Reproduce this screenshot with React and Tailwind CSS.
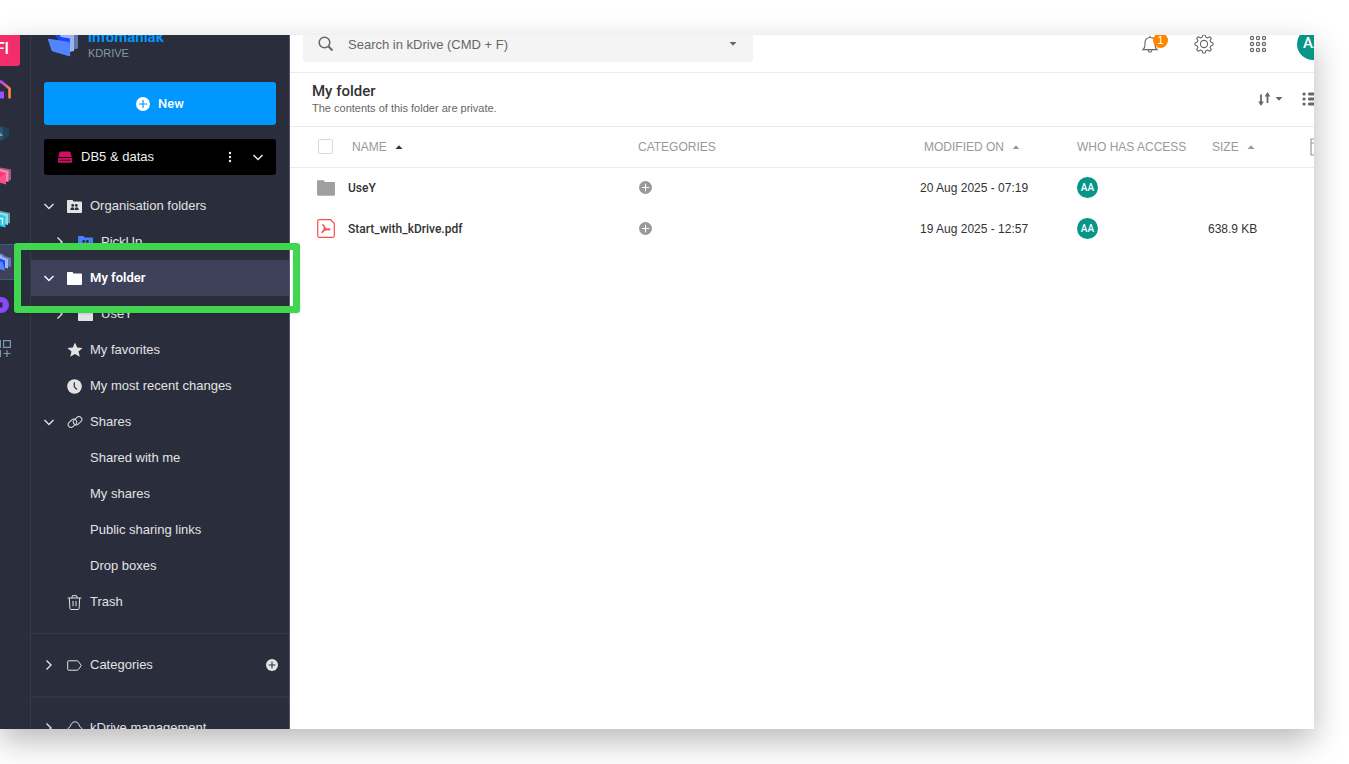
import clsx from 'clsx'

function Chevron({ open, className }) {
  return (
    <svg viewBox="0 0 12 12" className={clsx('size-3 shrink-0', className)} fill="none" stroke="currentColor" strokeWidth="1.4">
      <path d={open ? 'M1.5 3.9 6 8.4l4.5-4.5' : 'M3.5 1.5 8 6l-4.5 4.5'} />
    </svg>
  )
}

function Caret({ up, className }) {
  return (
    <svg viewBox="0 0 8 4" className={clsx('h-1 w-2 shrink-0', className)} fill="currentColor">
      <path d={up ? 'M.5 4h7L4 .3z' : 'M.5 0h7L4 3.7z'} />
    </svg>
  )
}

function PlusCircle({ className, cross }) {
  return (
    <svg viewBox="0 0 14 14" className={clsx('shrink-0', className)}>
      <circle cx="7" cy="7" r="7" fill="currentColor" />
      <path d="M7 3v8M3 7h8" stroke={cross} strokeWidth="1.2" />
    </svg>
  )
}

function FolderIcon({ className, people }) {
  return (
    <svg viewBox="0 0 15 13" className={clsx('shrink-0', className)}>
      <path d="M.8 0h4.4c.5 0 .8.2.9.7l.3.9h7.8c.4 0 .8.3.8.8v9.8c0 .4-.4.8-.8.8H.8c-.4 0-.8-.4-.8-.8V.8C0 .4.4 0 .8 0z" fill="currentColor" />
      {people && (
        <g fill="#292d3c">
          <circle cx="5.7" cy="5.4" r="1.4" />
          <circle cx="9.3" cy="5.4" r="1.4" />
          <path d="M3.3 10c0-1.9.9-2.8 2.2-2.8 1.2 0 1.8.6 1.9 2.8zM7.8 10c0-1.9.6-2.8 1.7-2.8 1.3 0 2.2.9 2.2 2.8z" />
        </g>
      )}
    </svg>
  )
}

const icons = {
  org: <FolderIcon people className="h-[13px] w-[15px]" />,
  shared: <FolderIcon people className="h-[13px] w-[15px] text-[#4a7dff]" />,
  folder: <FolderIcon className="h-[13px] w-[15px]" />,
  star: (
    <svg viewBox="0 0 16 16" className="size-4 shrink-0" fill="currentColor">
      <path d="m8 .5 2.200 5 5.400.5-4.100 3.500 1.300 5.300L8 12.100l-4.800 2.700 1.300-5.300L.4 6l5.400-.5z" />
    </svg>
  ),
  clock: (
    <svg viewBox="0 0 15 15" className="size-[15px]">
      <circle cx="7.5" cy="7.5" r="7.3" fill="currentColor" />
      <path d="M7.3 3.300v4.500l2.700 2.700" fill="none" stroke="#292d3c" strokeWidth="1.2" />
    </svg>
  ),
  link: (
    <svg viewBox="0 0 16 16" className="size-4 shrink-0" fill="none" stroke="currentColor" strokeWidth="1">
      <rect x="-4.7" y="-2.9" width="9.4" height="5.8" rx="2.9" transform="translate(5.4 9.3) rotate(-42)" />
      <rect x="-4.7" y="-2.9" width="9.4" height="5.8" rx="2.9" transform="translate(10.6 6.7) rotate(-42)" />
    </svg>
  ),
  trash: (
    <svg viewBox="0 0 15 15" className="size-[15px]" fill="none" stroke="currentColor" strokeWidth="1">
      <path d="M.7 3h13.600M4.800 3l.6-2.300h4.200l.6 2.300M2.300 3l.6 10.400c0 .6.5 1.100 1.100 1.100h7c.6 0 1.100-.5 1.100-1.100L12.700 3M6 5.900v5.300M9 5.900v5.300" />
    </svg>
  ),
  tag: (
    <svg viewBox="0 0 15 11" className="h-[11px] w-[15px]" fill="none" stroke="currentColor" strokeWidth="1">
      <path d="M1.5.8h8.900c.4 0 .7.2.9.5l3 4.200-3 4.200c-.2.300-.5.500-.9.500H1.500c-.5 0-.8-.3-.8-.8V1.600c0-.5.3-.8.800-.8z" />
    </svg>
  ),
  cloud: (
    <svg viewBox="0 0 16 14" className="h-[14px] w-4 shrink-0" fill="none" stroke="currentColor" strokeWidth="1">
      <path d="M4 13c-2 0-3.300-1.300-3.300-3.200S1.900 6 3.300 5.500C3.800 2.900 5.600.8 8 .8s4.200 2.100 4.700 4.700c1.400.5 2.600 2.400 2.600 4.300S14 13 12 13z" />
    </svg>
  ),
}

const navItems = [
  { label: 'Organisation folders', icon: 'org', open: true },
  { label: 'PickUp', icon: 'shared', open: false, nested: true },
  { label: 'My folder', icon: 'folder', open: true, active: true },
  { label: 'UseY', icon: 'folder', open: false, nested: true },
  { label: 'My favorites', icon: 'star' },
  { label: 'My most recent changes', icon: 'clock' },
  { label: 'Shares', icon: 'link', open: true },
  { label: 'Shared with me' },
  { label: 'My shares' },
  { label: 'Public sharing links' },
  { label: 'Drop boxes' },
  { label: 'Trash', icon: 'trash' },
]

const files = [
  { name: 'UseY', type: 'folder', modified: '20 Aug 2025 - 07:19', size: '' },
  { name: 'Start_with_kDrive.pdf', type: 'pdf', modified: '19 Aug 2025 - 12:57', size: '638.9 KB' },
]

function NavItem({ item }) {
  return (
    <li className="relative">
      <a
        href="#"
        className={clsx(
          'flex h-9 items-center text-[13px]',
          item.nested ? 'pl-[23px]' : 'pl-3',
          item.active ? "bg-[#3e415a] font-['Roboto'] font-semibold text-white" : 'text-[#e3e3e3]'
        )}
      >
        <span className="w-6 shrink-0">
          {item.open !== undefined && <Chevron open={item.open} />}
        </span>
        <span className="flex w-[23px] shrink-0">
          <span className="flex w-[15px] justify-center">{icons[item.icon]}</span>
        </span>
        {item.label}
      </a>
      {item.active && (
        <span className="pointer-events-none absolute -top-[17px] -right-[11px] -bottom-[17px] -left-[17px] z-20 rounded-[3px] border-[7px] border-[#41d650] shadow-sm" />
      )}
    </li>
  )
}

function RailIcon({ name }) {
  if (name === 'home') {
    return (
      <svg viewBox="0 0 22 20" className="h-5 w-[22px]" fill="none">
        <defs>
          <linearGradient id="home" x1="0" x2="1">
            <stop offset=".35" stopColor="#8b4dff" />
            <stop offset=".75" stopColor="#f04fc0" />
            <stop offset="1" stopColor="#ff8a3c" />
          </linearGradient>
        </defs>
        <path d="M1.5 18.500V8.500L11 1.500l8.500 7v10" stroke="url(#home)" strokeWidth="2.6" />
        <path d="M7 18.500v-7h7v7z" fill="#9b51ff" />
      </svg>
    )
  }
  if (name === 'chat') {
    return (
      <svg viewBox="0 0 20 20" className="size-5">
        <path d="m2 2 9 1 7 3v7l-5 4-6 2z" fill="#1f4257" />
        <path d="m2 3.500 10 1v11L7 18z" fill="#28566f" />
        <path d="M8 8v5h4z" fill="#8796a1" />
      </svg>
    )
  }
  if (name === 'mail') {
    return (
      <svg viewBox="0 0 22 20" className="h-5 w-[22px]">
        <path d="m8 1 13 2.500v11L8 12z" fill="#a75d80" />
        <path d="m5 2 13.500 3v11L5 13z" fill="#ee8dad" />
        <path d="m0 3 16 4v11.500L0 14z" fill="#f9508c" />
        <path d="m0 3 9 9 7-5z" fill="#ff3475" />
      </svg>
    )
  }
  if (name === 'calendar') {
    return (
      <svg viewBox="0 0 20 20" className="size-5">
        <path d="m6 1 13 3v10.500L6 12z" fill="#5e9eaa" />
        <path d="m4 2 13 3v11L4 13z" fill="#95dce4" />
        <path d="m0 3 14.500 4v11.500L0 15z" fill="#27c9ea" />
        <path d="M8.500 9.500h3v6" stroke="#fff" strokeWidth="1.3" fill="none" />
      </svg>
    )
  }
  if (name === 'drive') {
    return (
      <svg viewBox="0 0 20 20" className="size-5 shrink-0">
        <path d="m6 1 6 1 1.500 2L20 6v9l-7-1z" fill="#6678b8" />
        <path d="m4 2 6 1 1.500 2L17 7v9.500l-8-2z" fill="#9fb5ef" />
        <path d="m0 4 8 2 6 2.500v9L4 14z" fill="#184aff" />
        <path d="m0 8 11.500 2 2.500 8.500L0 15z" fill="#5687ff" />
      </svg>
    )
  }
  if (name === 'meet') {
    return (
      <svg viewBox="0 0 16 16" className="size-4">
        <circle cx="8" cy="8" r="8" fill="#8a48f8" />
        <path d="M4 5.500h5.500v5H4z" fill="#272b3a" />
      </svg>
    )
  }
  return (
    <svg viewBox="0 0 22 20" className="h-5 w-[22px]" fill="none" stroke="#7b98ac" strokeWidth="1.2">
      <path d="M3.6 2.600h6.800v6.800H3.600zM13.600 2.600h6.800v6.800h-6.800zM3.600 12.600h6.800v5.800H3.600zM17 12v7M13.500 15.500h7" />
    </svg>
  )
}

function Rail() {
  return (
    <nav aria-label="Applications" className="flex w-[59px] shrink-0 flex-col items-center border-r border-[#353a4b] pt-3">
      <button className="mb-[2px] flex h-[39px] w-[38px] shrink-0 items-center justify-end rounded-[3px] bg-[#f12d6b] pt-1 pr-[11px] font-['Roboto'] text-[16px] font-medium text-white">
        FI
      </button>
      {['home', 'chat', 'mail', 'calendar', 'drive', 'meet', 'apps'].map((name) => (
        <a key={name} href="#" aria-label={name} className="flex h-[43px] shrink-0 items-center">
          <span
            className={clsx(
              'flex h-9 w-9 items-center justify-center',
              name === 'drive' && 'border-y border-[#375f80] bg-[#3e415a]'
            )}
          >
            <RailIcon name={name} />
          </span>
        </a>
      ))}
    </nav>
  )
}

function Sidebar() {
  return (
    <aside className="z-10 w-[259px] shrink-0 border-r border-[#55596a]">
      <div className="flex h-[67px] items-center pb-3 pl-4">
        <svg viewBox="0 0 32 30" className="mr-[9px] h-[30px] w-8">
          <path d="m13 0 18 2v18.500l-9 2z" fill="#6377ad" />
          <path d="m10 2 17 1v20l-7 1.500z" fill="#9bb2ee" />
          <path d="m5 4 7 2 2 3 9 1.500-1 14z" fill="#1747ff" />
          <path d="M1 11.800c-.2-.8.3-1.300 1-1.100l19 3c.8.1 1 .5 1.100 1.200l1.200 12.300c0 .9-.5 1.300-1.300 1L6 23.500c-.8-.2-1.200-.6-1.500-1.300z" fill="#5185ff" />
        </svg>
        <div className="pt-1">
          <div className="font-['Roboto'] text-[15px] leading-[16px] font-bold text-[#0098ff]">infomaniak</div>
          <div className="text-[11px] leading-[16px] text-[#8298ab]">KDRIVE</div>
        </div>
      </div>
      <div className="flex flex-col gap-[14px] px-[13px]">
        <button className="flex h-[43px] items-center justify-center gap-2 rounded-[3px] bg-[#0098ff] font-['Roboto'] text-[13px] font-medium text-white">
          <PlusCircle className="size-[14px]" cross="#0098ff" />
          New
        </button>
        <div className="flex h-9 items-center rounded-[3px] bg-black pr-3 pl-[14px] text-[13px] text-[#f0f0f0]">
          <svg viewBox="0 0 14 12" className="mr-[9px] h-3 w-[14px]" fill="#d10f63">
            <path d="M2.500.5h9c.5 0 .8.200.9.700L13.800 6H.2l1.400-4.800c.1-.5.400-.7.900-.7zM0 7h14v3.700c0 .6-.4 1-1 1H1c-.6 0-1-.4-1-1z" />
            <path d="M1.500 9.300h11" stroke="#000" strokeWidth=".7" />
          </svg>
          DB5 &amp; datas
          <button aria-label="Drive options" className="ml-auto">
            <svg viewBox="0 0 4 12" className="h-3 w-1" fill="currentColor">
              <circle cx="2" cy="2" r="1.2" />
              <circle cx="2" cy="6" r="1.2" />
              <circle cx="2" cy="10" r="1.2" />
            </svg>
          </button>
          <button aria-label="Switch drive" className="ml-5">
            <Chevron open />
          </button>
        </div>
      </div>
      <ul className="mt-[13px]">
        {navItems.map((item) => (
          <NavItem key={item.label} item={item} />
        ))}
      </ul>
      <ul className="mt-[13px] border-t border-[#353a4b]">
        <li className="flex items-center border-b-2 border-[#303547] py-[13px] pr-[11px]">
          <div className="flex-1">
            <ul>
              <NavItem item={{ label: 'Categories', icon: 'tag', open: false }} />
            </ul>
          </div>
          <button aria-label="Add category" className="text-[#e3e3e3]">
            <PlusCircle className="size-3" cross="#292d3c" />
          </button>
        </li>
      </ul>
      <ul className="mt-3">
        <NavItem item={{ label: 'kDrive management', icon: 'cloud', open: false }} />
      </ul>
    </aside>
  )
}

function TopBar() {
  return (
    <header className="flex h-[58px] shrink-0 items-center border-b border-[#ebebeb] pr-[21px] pl-[13px] text-[#666]">
      <label className="flex h-9 w-[450px] items-center rounded-[3px] bg-[#f4f4f4] pr-4 pl-[15px]">
        <svg viewBox="0 0 16 16" className="mr-[14px] size-4" fill="none" stroke="currentColor" strokeWidth="1.5">
          <circle cx="6.5" cy="6.5" r="5.3" />
          <path d="m10.500 10.500 4 4" strokeWidth="1.9" />
        </svg>
        <input
          type="search"
          aria-label="Search"
          placeholder="Search in kDrive (CMD + F)"
          className="flex-1 bg-transparent pt-[2px] text-[13px] outline-none placeholder:text-[#666]"
        />
        <Caret />
      </label>
      <div className="ml-auto flex items-center gap-9">
        <button aria-label="Notifications" className="relative">
          <svg viewBox="0 0 18 18" className="size-[18px]" fill="none" stroke="currentColor" strokeWidth="1.1">
            <path d="M2 14.600h14c-1.500-1.300-2-2.600-2-4.600V7.500c0-2.900-2-5-5-5s-5 2.100-5 5V10c0 2-.5 3.300-2 4.600zM9 2.500V.8M7 15c.2 1.500 1 2.300 2 2.300s1.800-.8 2-2.300" />
          </svg>
          <span className="absolute -top-[2px] -right-[9px] flex size-[15px] items-center justify-center rounded-full bg-[#ff8500] text-[11px] text-white">
            1
          </span>
        </button>
        <button aria-label="Settings">
          <svg viewBox="0 0 20 20" className="-mx-px size-5" fill="none" stroke="currentColor" strokeWidth="1.1" strokeLinejoin="round">
            <path d="M8.100 3.300 8.900 1h2.200l.8 2.300c.5.200 1 .4 1.500.6l2.300-1.200 1.600 1.600-1.200 2.300c.2.500.4 1 .6 1.500l2.300.8v2.200l-2.300.8c-.2.500-.4 1-.6 1.500l1.200 2.300-1.600 1.600-2.300-1.200c-.5.200-1 .4-1.500.6l-.8 2.300H8.900l-.8-2.300c-.5-.2-1-.4-1.500-.6l-2.300 1.200-1.600-1.600 1.200-2.300c-.2-.5-.4-1-.6-1.500L1 11.100V8.900l2.300-.8c.2-.5.4-1 .6-1.500L2.700 4.300l1.600-1.600 2.300 1.200c.5-.2 1-.4 1.500-.6z" />
            <circle cx="10" cy="10" r="3.6" />
          </svg>
        </button>
        <button aria-label="Applications">
          <svg viewBox="0 0 18 18" className="size-[18px]" fill="none" stroke="currentColor" strokeWidth="1.2">
            {[3, 9, 15].map((y) => [3, 9, 15].map((x) => <circle key={x + '-' + y} cx={x} cy={y} r="1.6" />))}
          </svg>
        </button>
        <button className="-ml-[6px] size-8 rounded-full bg-[#069688] font-['Roboto'] text-[15px] font-medium text-white">AA</button>
      </div>
    </header>
  )
}

function FolderHeading() {
  return (
    <div className="flex h-[54px] shrink-0 items-center border-b border-[#ebebeb] pr-[30px] pb-[2px] pl-[22px]">
      <div>
        <h1 className="font-['Roboto'] text-[15px] leading-[18px] font-medium text-[#333]">My folder</h1>
        <p className="text-[11px] leading-[16px] text-[#666]">The contents of this folder are private.</p>
      </div>
      <button aria-label="Sort" className="ml-auto flex items-center gap-1 text-[#666]">
        <svg viewBox="0 0 14 16" className="h-4 w-[14px]" fill="none" stroke="currentColor" strokeWidth="1.8">
          <path d="M4 3.500v9M10.500 12V3" />
          <path d="M1.200 10.500h5.600L4 15zM7.700 5.500h5.600L10.500 1z" fill="currentColor" stroke="none" />
        </svg>
        <Caret />
      </button>
      <button aria-label="List view" className="ml-[19px] text-[#666]">
        <svg viewBox="0 0 18 16" className="h-4 w-[18px]" fill="none" stroke="currentColor" strokeWidth="3.2" strokeLinecap="round">
          <path d="M2 3h.1M2 8h.1M2 13h.1M7.500 3h9M7.500 8h9M7.500 13h9" />
        </svg>
      </button>
    </div>
  )
}

function FileIcon({ type }) {
  if (type === 'folder') return <FolderIcon className="h-[16px] w-[18px] text-[#9f9f9f]" />
  return (
    <svg viewBox="0 0 18 19" className="h-[19px] w-[18px] shrink-0" fill="none" stroke="#f5504a">
      <path d="M2.200.7h11.300l3.800 3.600v12.500c0 .9-.6 1.500-1.500 1.500H2.200c-.9 0-1.500-.6-1.500-1.500V2.200C.7 1.300 1.300.7 2.200.7z" strokeWidth="1.2" />
      <path d="M5.800 5.800c1.200.6 2 2.700 1.500 4.300-.4 1.300-1.200 2.300-2.300 3.200M7.300 8.300c.8 1.500 2.500 2.300 5.200 1.800M5.200 13.300c1.300-2 3.800-3.100 7.300-2.500" strokeWidth="1.5" strokeLinecap="round" />
    </svg>
  )
}

function FileTable() {
  return (
    <table className="w-full table-fixed text-[12px] text-[#333]">
      <colgroup>
        <col />
        <col className="w-[282px]" />
        <col className="w-[157px]" />
        <col className="w-[131px]" />
        <col className="w-[102px]" />
        <col className="w-[40px]" />
      </colgroup>
      <thead>
        <tr className="h-10 border-b border-[#ebebeb] text-left text-[12px] text-[#999]">
          <th className="pl-7 font-normal">
            <div className="flex items-center">
              <input
                type="checkbox"
                aria-label="Select all"
                className="mr-[19px] size-[15px] appearance-none rounded-[2px] border border-[#d9d9d9] bg-white"
              />
              NAME
              <Caret up className="ml-2 text-[#333]" />
            </div>
          </th>
          <th className="font-normal">CATEGORIES</th>
          <th className="pl-1 font-normal">
            <div className="flex items-center">
              MODIFIED ON
              <Caret up className="ml-2" />
            </div>
          </th>
          <th className="font-normal whitespace-nowrap">WHO HAS ACCESS</th>
          <th className="pl-1 font-normal">
            <div className="flex items-center">
              SIZE
              <Caret up className="ml-2" />
            </div>
          </th>
          <th>
            <button aria-label="Columns" className="flex">
              <svg viewBox="0 0 18 18" className="size-[18px]" fill="none" stroke="currentColor" strokeWidth="1.2">
                <path d="M1 1h16v16H1zM1 5h16M7 5v12M12 5v12" />
              </svg>
            </button>
          </th>
        </tr>
      </thead>
      <tbody>
        {files.map((file) => (
          <tr key={file.name} className="h-[41px]">
            <td className="pl-[27px] font-['Roboto'] font-medium">
              <div className="flex items-center gap-[13px]">
                <FileIcon type={file.type} />
                {file.name}
              </div>
            </td>
            <td>
              <button aria-label="Add category" className="flex pl-px text-[#999]">
                <PlusCircle className="size-[13px]" cross="#fff" />
              </button>
            </td>
            <td>{file.modified}</td>
            <td>
              <span className="flex size-[21px] items-center justify-center rounded-full bg-[#069688] font-['Roboto'] text-[10px] font-medium text-white">
                AA
              </span>
            </td>
            <td>{file.size}</td>
            <td />
          </tr>
        ))}
      </tbody>
    </table>
  )
}

export default function App() {
  return (
    <div className="flex h-screen overflow-hidden bg-white py-[35px] pr-[35px] font-['Liberation_Sans',Arial,sans-serif]">
      <div className="flex min-w-0 flex-1 overflow-hidden bg-[#292d3c] shadow-[0_12px_30px_rgba(0,0,0,0.28)]">
        <div className="-mt-5 -mr-9 -ml-7 flex min-w-0 flex-1">
          <Rail />
          <Sidebar />
          <main className="flex min-w-0 flex-1 flex-col bg-white">
            <TopBar />
            <FolderHeading />
            <FileTable />
          </main>
        </div>
      </div>
    </div>
  )
}
